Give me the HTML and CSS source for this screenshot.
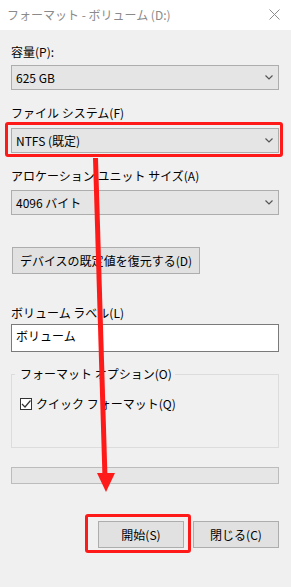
FILE: index.html
```html
<!DOCTYPE html>
<html lang="ja">
<head>
<meta charset="utf-8">
<title>フォーマット - ボリューム (D:)</title>
<link rel="stylesheet" href="styles.css">
</head>
<body>
<div class="window">
  <div class="titlebar">
    <span class="title">フォーマット - ボリューム (D:)</span>
    <svg class="close" width="11" height="11" viewBox="0 0 11 11"><path d="M0.5 0.5 L10.5 10.5 M10.5 0.5 L0.5 10.5" stroke="#8c8c8c" stroke-width="1" fill="none"/></svg>
  </div>
  <div class="content">
    <div class="label l1">容量(P):</div>
    <div class="select">
      <span>625 GB</span>
      <svg class="chev" width="8" height="5" viewBox="0 0 8 5"><path d="M0.5 0.5 L4 4 L7.5 0.5" stroke="#555" stroke-width="1.2" fill="none"/></svg>
    </div>
    <div class="label l2">ファイル システム(F)</div>
    <div class="select">
      <span>NTFS (既定)</span>
      <svg class="chev" width="8" height="5" viewBox="0 0 8 5"><path d="M0.5 0.5 L4 4 L7.5 0.5" stroke="#555" stroke-width="1.2" fill="none"/></svg>
    </div>
    <div class="label l3">アロケーション ユニット サイズ(A)</div>
    <div class="select">
      <span>4096 バイト</span>
      <svg class="chev" width="8" height="5" viewBox="0 0 8 5"><path d="M0.5 0.5 L4 4 L7.5 0.5" stroke="#555" stroke-width="1.2" fill="none"/></svg>
    </div>
    <div class="btn restore">デバイスの既定値を復元する(D)</div>
    <div class="label l4">ボリューム ラベル(L)</div>
    <div class="textbox">ボリューム</div>
    <fieldset class="group">
      <legend>フォーマット オプション(O)</legend>
      <div class="check">
        <span class="box"><svg width="10" height="10" viewBox="0 0 10 10"><path d="M1 5 L4 8 L9.5 1.5" stroke="#333" stroke-width="1.2" fill="none"/></svg></span>
        <span>クイック フォーマット(Q)</span>
      </div>
    </fieldset>
    <div class="progress"></div>
    <div class="actions">
      <div class="btn action">開始(S)</div>
      <div class="btn action">閉じる(C)</div>
    </div>
  </div>
  <div class="mark mark1"></div>
  <div class="mark mark2"></div>
  <svg class="arrow" width="291" height="587" viewBox="0 0 291 587">
    <line x1="95.5" y1="158" x2="105" y2="478" stroke="#ff1a1a" stroke-width="5"/>
    <polygon points="97,473 115,473 106,492" fill="#ff1a1a"/>
  </svg>
</div>
</body>
</html>
```

FILE: styles.css
```css
* { box-sizing: border-box; }
html, body { margin: 0; padding: 0; }
body {
  width: 291px;
  height: 587px;
  background: #f0f0f0;
  font-family: "Noto Sans CJK JP", "Noto Sans", sans-serif;
  font-size: 12px;
  color: #000;
  overflow: hidden;
}
.window { position: relative; width: 291px; height: 587px; }
.titlebar {
  height: 30px;
  background: #fff;
  display: flex;
  align-items: center;
  justify-content: space-between;
  padding: 0 11px 0 7px;
}
.title { color: #8a8a8a; font-size: 12px; line-height: 16px; }
.close { display: block; margin-top: -2px; }
.content {
  padding: 0 12px 0 11px;
  display: flex;
  flex-direction: column;
}
.label { line-height: 16px; height: 16px; }
.l1 { margin-top: 14px; }
.l2 { margin-top: 15px; }
.l3 { margin-top: 15px; }
.l4 { margin-top: 31px; }
.select {
  margin-top: 5px;
  height: 25px;
  background: #e5e5e5;
  border: 1px solid #adadad;
  display: flex;
  align-items: center;
  justify-content: space-between;
  padding: 0 5px 0 4px;
  line-height: 16px;
}
.l2 + .select { margin-top: 7px; }
.l3 + .select { margin-top: 6px; }
.chev { display: block; }
.btn {
  background: #e1e1e1;
  border: 1px solid #adadad;
  height: 27px;
  display: flex;
  align-items: center;
  justify-content: center;
  line-height: 16px;
}
.restore {
  margin-top: 32px;
  margin-left: 1px;
  width: 188px;
}
.textbox {
  margin-top: 3px;
  height: 28px;
  background: #fff;
  border: 1px solid #7a7a7a;
  padding: 3px 4px 0;
  line-height: 16px;
}
.group {
  margin: 14px 0 0;
  height: 82px;
  border: 1px solid #dcdcdc;
  padding: 0 8px 0 3px;
}
.group legend {
  padding: 0 3px 0 5px;
  line-height: 16px;
}
.check {
  display: flex;
  align-items: center;
  gap: 4px;
  margin-top: 14px;
  margin-left: 5px;
  line-height: 16px;
}
.box {
  width: 12px;
  height: 12px;
  border: 1px solid #333;
  background: #fff;
  display: flex;
  align-items: center;
  justify-content: center;
}
.box svg { display: block; }
.progress {
  margin-top: 19px;
  height: 17px;
  background: #e6e6e6;
  border: 1px solid #bcbcbc;
}
.actions {
  margin-top: 37px;
  display: flex;
  justify-content: flex-end;
  gap: 9px;
}
.action { width: 86px; }
.mark {
  position: absolute;
  border: 3px solid #ff1a1a;
  border-radius: 3px;
}
.mark1 { left: 5px; top: 122px; width: 278px; height: 35px; }
.mark2 { left: 85px; top: 514px; width: 106px; height: 39px; }
.arrow { position: absolute; left: 0; top: 0; pointer-events: none; }
```
